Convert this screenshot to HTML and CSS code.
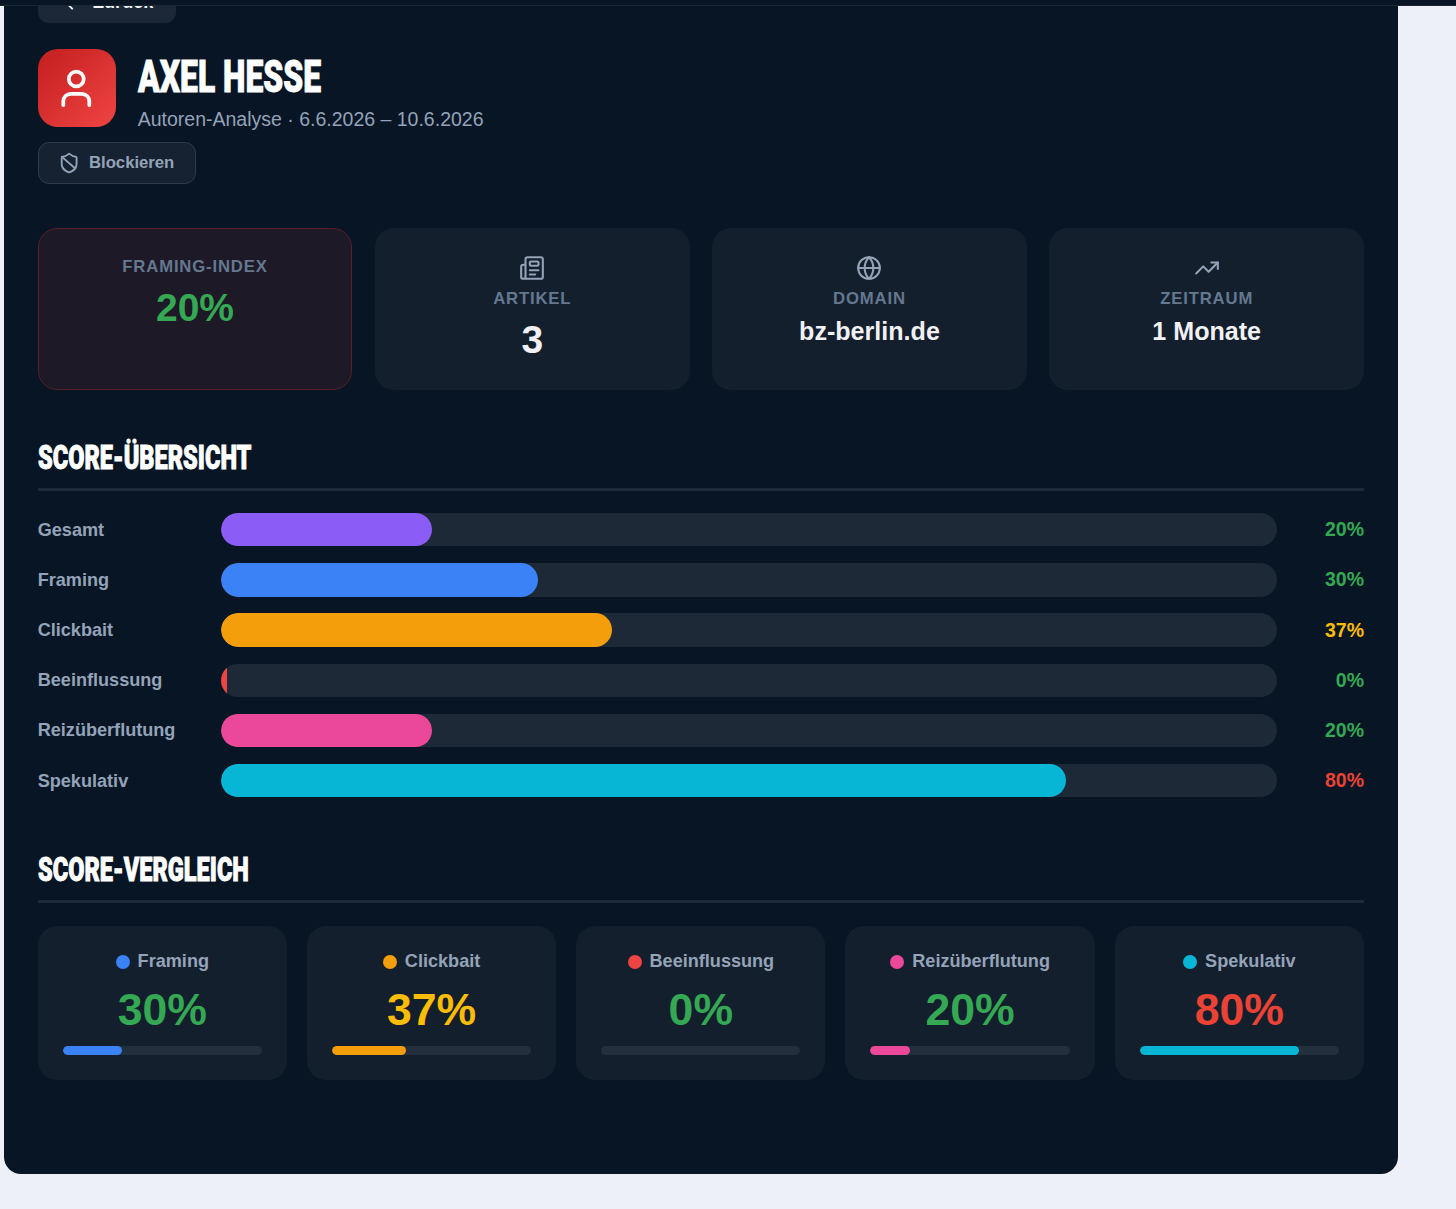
FILE: index.html
```html
<!DOCTYPE html>
<html lang="de">
<head>
<meta charset="UTF-8">
<meta name="viewport" content="width=device-width, initial-scale=1.0">
<title>Autoren-Analyse: Axel Hesse</title>
<link rel="stylesheet" href="styles.css">
</head>
<body>
    <div class="topbar"></div>

    <main class="page">
        <div class="panel">
            <button class="btn back">
                <svg viewBox="0 0 24 24"><path d="m12 19-7-7 7-7"/><path d="M19 12H5"/></svg>
                Zurück
            </button>

            <!-- Author header -->
            <header class="author">
                <div class="avatar">
                    <svg viewBox="0 0 24 24"><path d="M19 21v-2a4 4 0 0 0-4-4H9a4 4 0 0 0-4 4v2"/><circle cx="12" cy="7" r="4"/></svg>
                </div>
                <div class="author-info">
                    <h1><span>AXEL HESSE</span></h1>
                    <p>Autoren-Analyse · 6.6.2026 – 10.6.2026</p>
                </div>
            </header>
            <button class="btn block">
                <svg viewBox="0 0 24 24"><path d="M20 13c0 5-3.500 7.500-7.660 8.950a1 1 0 0 1-.67-.01C7.500 20.500 4 18 4 13V6a1 1 0 0 1 1-1c2 0 4.500-1.200 6.240-2.720a1.170 1.170 0 0 1 1.520 0C14.510 3.810 17 5 19 5a1 1 0 0 1 1 1z"/><path d="m4.243 5.210 14.390 12.472"/></svg>
                Blockieren
            </button>

            <!-- Key figures -->
            <section class="stats">
                <div class="stat highlight">
                    <span class="stat-label">FRAMING-INDEX</span>
                    <span class="stat-value green">20%</span>
                </div>
                <div class="stat">
                    <svg viewBox="0 0 24 24"><path d="M15 18h-5"/><path d="M18 14h-8"/><path d="M4 22h16a2 2 0 0 0 2-2V4a2 2 0 0 0-2-2H8a2 2 0 0 0-2 2v16a2 2 0 0 1-4 0v-9a2 2 0 0 1 2-2h2"/><rect width="8" height="4" x="10" y="6" rx="1"/></svg>
                    <span class="stat-label">ARTIKEL</span>
                    <span class="stat-value">3</span>
                </div>
                <div class="stat">
                    <svg viewBox="0 0 24 24"><circle cx="12" cy="12" r="10"/><path d="M12 2a14.500 14.500 0 0 0 0 20 14.500 14.500 0 0 0 0-20"/><path d="M2 12h20"/></svg>
                    <span class="stat-label">DOMAIN</span>
                    <span class="stat-value small">bz-berlin.de</span>
                </div>
                <div class="stat">
                    <svg viewBox="0 0 24 24"><path d="M16 7h6v6"/><path d="m22 7-8.500 8.500-5-5L2 17"/></svg>
                    <span class="stat-label">ZEITRAUM</span>
                    <span class="stat-value small">1 Monate</span>
                </div>
            </section>

            <!-- Score bars -->
            <h2 class="overview-title"><span>SCORE-ÜBERSICHT</span></h2>
            <section class="bars">
                <div class="bar-row"><span class="bar-label">Gesamt</span><div class="track"><div class="fill violet" style="width: 20%"></div></div><span class="bar-value green">20%</span></div>
                <div class="bar-row"><span class="bar-label">Framing</span><div class="track"><div class="fill blue" style="width: 30%"></div></div><span class="bar-value green">30%</span></div>
                <div class="bar-row"><span class="bar-label">Clickbait</span><div class="track"><div class="fill orange" style="width: 37%"></div></div><span class="bar-value yellow">37%</span></div>
                <div class="bar-row"><span class="bar-label">Beeinflussung</span><div class="track"><div class="fill rose zero" style="width: 0%"></div></div><span class="bar-value green">0%</span></div>
                <div class="bar-row"><span class="bar-label">Reizüberflutung</span><div class="track"><div class="fill pink" style="width: 20%"></div></div><span class="bar-value green">20%</span></div>
                <div class="bar-row"><span class="bar-label">Spekulativ</span><div class="track"><div class="fill cyan" style="width: 80%"></div></div><span class="bar-value red">80%</span></div>
            </section>

            <!-- Score comparison -->
            <h2 class="compare-title"><span>SCORE-VERGLEICH</span></h2>
            <section class="compare">
                <div class="score">
                    <div class="score-name"><i class="dot blue"></i>Framing</div>
                    <div class="score-value green">30%</div>
                    <div class="mini"><div class="fill blue" style="width: 30%"></div></div>
                </div>
                <div class="score">
                    <div class="score-name"><i class="dot orange"></i>Clickbait</div>
                    <div class="score-value yellow">37%</div>
                    <div class="mini"><div class="fill orange" style="width: 37%"></div></div>
                </div>
                <div class="score">
                    <div class="score-name"><i class="dot rose"></i>Beeinflussung</div>
                    <div class="score-value green">0%</div>
                    <div class="mini"><div class="fill rose" style="width: 0%"></div></div>
                </div>
                <div class="score">
                    <div class="score-name"><i class="dot pink"></i>Reizüberflutung</div>
                    <div class="score-value green">20%</div>
                    <div class="mini"><div class="fill pink" style="width: 20%"></div></div>
                </div>
                <div class="score">
                    <div class="score-name"><i class="dot cyan"></i>Spekulativ</div>
                    <div class="score-value red">80%</div>
                    <div class="mini"><div class="fill cyan" style="width: 80%"></div></div>
                </div>
            </section>
        </div>
    </main>
</body>
</html>
```

FILE: styles.css
```css
* {
    box-sizing: border-box;
}

body {
    margin: 0;
    height: 1209px;
    overflow: hidden;
    background: #edf0f9;
    font-family: "Liberation Sans", Arial, sans-serif;
    color: #f1f5f9;
}

svg {
    fill: none;
    stroke: currentColor;
    stroke-width: 2;
    stroke-linecap: round;
    stroke-linejoin: round;
    flex: none;
}

.topbar {
    height: 6px;
    background: #071525;
    border-bottom: 1px solid #1b2735;
}

/* Content is scrolled a little under the top bar */
.page {
    height: 1203px;
    overflow: hidden;
    padding-left: 4px;
}

.panel {
    width: 1393.5px;
    height: 1228px;
    margin-top: -60px;
    padding: 35px 33.5px 0 33.7px;
    background: #071525;
    border-radius: 0 0 17px 17px;
}

.btn {
    display: flex;
    align-items: center;
    height: 42px;
    border: none;
    border-radius: 11px;
    font-family: inherit;
    font-weight: bold;
    background: #1c2838;
}

.btn svg {
    width: 22.3px;
    height: 22.3px;
}

.back {
    width: 138px;
    padding: 0 0 0 23px;
    gap: 10px;
    font-size: 18.1px;
    color: #f1f5f9;
}

.author {
    display: flex;
    gap: 22px;
    margin-top: 26px;
    height: 78px;
}

.avatar {
    width: 78px;
    height: 78px;
    border-radius: 20px;
    background: linear-gradient(135deg, #c41e1e, #ef4444);
    display: flex;
    align-items: center;
    justify-content: center;
    color: #fff;
}

.avatar svg {
    width: 44.6px;
    height: 44.6px;
}

h1, h2 {
    margin: 0;
    color: #fff;
    font-family: Roboto, "Liberation Sans", sans-serif;
    font-weight: 900;
    white-space: nowrap;
}

/* Condensed headline look */
h1 span, h2 span {
    display: inline-block;
    transform-origin: left center;
    -webkit-text-stroke: .9px #fff;
}

h1 {
    height: 55px;
    font-size: 45px;
    line-height: 55px;
}

h1 span {
    transform: scaleX(.708);
}

.author-info p {
    margin: 3px 0 0;
    font-size: 19.5px;
    line-height: 24px;
    color: #94a3b8;
}

.block {
    width: 158px;
    margin-top: 15px;
    padding: 0 0 0 19.5px;
    gap: 8.5px;
    font-size: 16.7px;
    color: #94a3b8;
    background: #162231;
    border: 1.4px solid #2f3b49;
}

.stats {
    display: grid;
    grid-template-columns: repeat(4, 1fr);
    gap: 22.6px;
    margin-top: 44.4px;
}

.stat {
    height: 162px;
    padding-top: 28px;
    border-radius: 19px;
    background: #141f2e;
    display: flex;
    flex-direction: column;
    align-items: center;
    color: #94a3b8;
}

.stat svg {
    width: 26px;
    height: 26px;
    margin: -1px 0 8px;
    stroke-width: 1.9;
}

.highlight {
    background: #1e1927;
    border: 1.4px solid #5a1e28;
}

.stat-label {
    font-size: 16.7px;
    font-weight: bold;
    line-height: 20px;
    letter-spacing: .84px;
    color: #64788f;
}

.stat-value {
    margin-top: 8px;
    font-size: 39px;
    font-weight: bold;
    line-height: 46px;
    color: #f1f1f4;
}

.stat-value.small {
    margin-top: 7px;
    font-size: 25.1px;
    line-height: 30px;
}

h2 {
    height: 54px;
    padding-top: 2px;
    font-size: 32.5px;
    line-height: 38px;
    border-bottom: 3px solid #1e2a39;
}

h2 span {
    transform: scaleX(.725);
}

.overview-title {
    margin-top: 46.6px;
}

.bars {
    display: flex;
    flex-direction: column;
    gap: 16.7px;
    margin-top: 22px;
}

.bar-row {
    display: grid;
    grid-template-columns: 183.5px 1056px 1fr;
    align-items: center;
    height: 33.5px;
}

.bar-label {
    padding-top: 1px;
    font-size: 18.1px;
    font-weight: bold;
    color: #94a3b8;
}

.bar-value {
    font-size: 19.5px;
    font-weight: bold;
    text-align: right;
}

.track {
    height: 33.5px;
    border-radius: 17px;
    background: #1e2938;
    overflow: hidden;
}

.fill {
    height: 100%;
    border-radius: 17px;
}

.fill.zero {
    min-width: 5.6px;
    border-radius: 0;
}

.compare-title {
    margin-top: 52px;
}

.compare {
    display: grid;
    grid-template-columns: repeat(5, 1fr);
    gap: 20px;
    margin-top: 22.5px;
}

.score {
    height: 154px;
    padding: 25.5px 25px 0;
    border-radius: 19px;
    background: #141f2e;
}

.score-name {
    display: flex;
    align-items: center;
    justify-content: center;
    gap: 8px;
    font-size: 18.1px;
    font-weight: bold;
    line-height: 21px;
    color: #94a3b8;
}

.dot {
    width: 14px;
    height: 14px;
    border-radius: 50%;
}

.score-value {
    margin-top: 11.5px;
    font-size: 44.6px;
    font-weight: bold;
    line-height: 52px;
    text-align: center;
}

.mini {
    height: 9px;
    margin-top: 10.5px;
    border-radius: 5px;
    background: #242f3d;
    overflow: hidden;
}

.green { color: #34a853; }
.yellow { color: #fbbc04; }
.stat-value.green { color: #34a853; }
.red { color: #ea4335; }

.violet { background: #8b5cf6; }
.blue { background: #3b82f6; }
.orange { background: #f59e0b; }
.rose { background: #ef4444; }
.pink { background: #ec4899; }
.cyan { background: #06b6d4; }
```
